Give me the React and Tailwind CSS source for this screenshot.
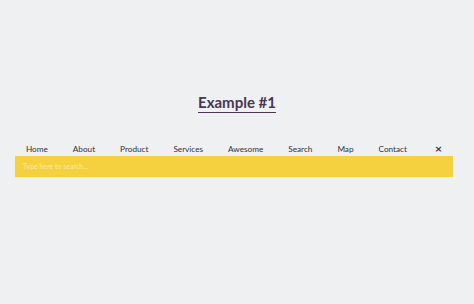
import React from "react";

const links = ["Home", "About", "Product", "Services", "Awesome", "Search", "Map", "Contact"];

export default function App() {
  return (
    <div className="min-h-[304px] w-full bg-[#eef0f1] font-['Lato',sans-serif]">
      {/* Title */}
      <div className="flex justify-center pt-[92px]">
        <h1 className="text-[15px] leading-[20px] font-bold text-[#4a3553] border-b border-[#4a3553]">
          Example #1
        </h1>
      </div>

      {/* Nav + search */}
      <div className="mx-[15px] mt-[26px] w-[438px]">
        <nav className="flex items-center h-[17px] text-[8.2px] text-[#333333] pl-[11px] pt-[3px]">
          <div className="flex gap-[25px]">
            {links.map((l) => (
              <a key={l} className="leading-[14px]">{l}</a>
            ))}
          </div>
          <span className="ml-auto mr-[11px] text-[12px] font-bold text-[#3b2f48] leading-none">×</span>
        </nav>
        <div className="h-[21px] bg-[#f5d03f] flex items-center px-[8px]">
          <span className="text-[7px] text-[#fbeaa9]">Type here to search...</span>
        </div>
      </div>
    </div>
  );
}
